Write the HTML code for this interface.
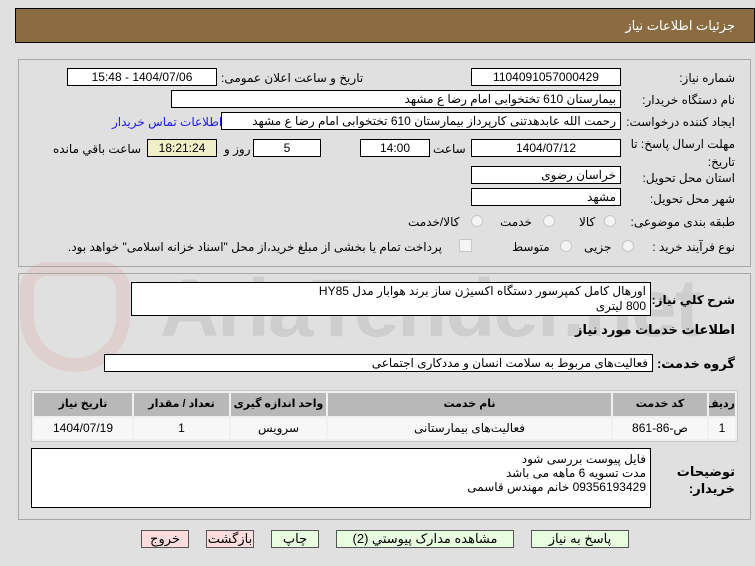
<!DOCTYPE html>
<html><head><meta charset="utf-8"><style>
*{margin:0;padding:0;box-sizing:border-box}
body{width:755px;height:566px;background:#e0e0e0;font-family:"Liberation Sans","DejaVu Sans",sans-serif;font-size:12px;color:#000;position:relative;overflow:hidden;direction:rtl}
.a{position:absolute;white-space:nowrap}
.box{position:absolute;background:#fff;border:1px solid #000;padding:0 4px;line-height:16px;white-space:nowrap}
.c{text-align:center}
.lbl{position:absolute;white-space:nowrap;line-height:16px}
.panel{position:absolute;border:1px solid #a8a8a8}
.rad{position:absolute;width:12px;height:12px;border-radius:50%;border:1px solid #c8c8c8;background:#f4f4f4}
.btn{position:absolute;border:1px solid #555;text-align:center;line-height:16px;font-size:13px}
.th,.td{position:absolute;text-align:center;white-space:nowrap;overflow:hidden}
.th{background:#b8b8b8;font-weight:bold;top:393px;height:23px;line-height:23px;font-size:11px}
.td{background:#f7f7f7;top:418px;height:21px;line-height:21px}
</style></head><body>
<div class="a" style="left:15px;top:8px;width:740px;height:35px;background:#8b6c42;border:1px solid #000"></div>
<div class="a" style="right:20px;top:18px;color:#fff;font-size:13px">جزئیات اطلاعات نیاز</div>

<div class="panel" style="left:18px;top:59px;width:733px;height:208px"></div>
<div class="a" style="left:20px;top:262px;width:110px;height:110px;border:14px solid rgba(220,120,120,0.15);border-radius:30px 30px 60px 60px"></div>
<div class="a" style="left:160px;top:262px;font-size:82px;font-weight:bold;color:rgba(0,0,0,0.08);direction:ltr;letter-spacing:-2px">AriaTender.net</div>

<div class="lbl" style="right:20px;top:70px">شماره نیاز:</div>
<div class="box c" style="left:471px;top:68px;width:150px;height:18px">1104091057000429</div>
<div class="lbl" style="left:221px;top:70px">تاریخ و ساعت اعلان عمومی:</div>
<div class="box c" style="left:67px;top:68px;width:150px;height:18px">1404/07/06 - 15:48</div>

<div class="lbl" style="right:20px;top:92px">نام دستگاه خریدار:</div>
<div class="box" style="left:171px;top:90px;width:450px;height:18px">بیمارستان 610 تختخوابی امام رضا ع  مشهد</div>

<div class="lbl" style="right:20px;top:114px">ایجاد کننده درخواست:</div>
<div class="box" style="left:221px;top:112px;width:400px;height:18px">رحمت الله عابدهدتنی کارپرداز بیمارستان 610 تختخوابی امام رضا ع  مشهد</div>
<div class="lbl" style="left:112px;top:114px;color:#1a1aff">اطلاعات تماس خریدار</div>

<div class="lbl" style="right:20px;top:136px">مهلت ارسال پاسخ: تا</div>
<div class="lbl" style="right:20px;top:154px">تاریخ:</div>
<div class="box c" style="left:471px;top:139px;width:150px;height:18px">1404/07/12</div>
<div class="lbl" style="left:433px;top:141px">ساعت</div>
<div class="box c" style="left:360px;top:139px;width:70px;height:18px">14:00</div>
<div class="box c" style="left:253px;top:139px;width:68px;height:18px">5</div>
<div class="lbl" style="left:224px;top:141px">روز و</div>
<div class="box c" style="left:147px;top:139px;width:70px;height:18px;background:#f0efc8">18:21:24</div>
<div class="lbl" style="left:53px;top:141px">ساعت باقي مانده</div>

<div class="lbl" style="right:20px;top:170px">استان محل تحویل:</div>
<div class="box" style="left:471px;top:166px;width:150px;height:18px">خراسان رضوی</div>
<div class="lbl" style="right:20px;top:191px">شهر محل تحویل:</div>
<div class="box" style="left:471px;top:188px;width:150px;height:18px">مشهد</div>

<div class="lbl" style="right:20px;top:214px">طبقه بندی موضوعی:</div>
<div class="rad" style="left:604px;top:215px"></div><div class="lbl" style="left:579px;top:214px">کالا</div>
<div class="rad" style="left:543px;top:215px"></div><div class="lbl" style="left:500px;top:214px">خدمت</div>
<div class="rad" style="left:471px;top:215px"></div><div class="lbl" style="left:408px;top:214px">کالا/خدمت</div>

<div class="lbl" style="right:20px;top:239px">نوع فرآیند خرید :</div>
<div class="rad" style="left:622px;top:240px"></div><div class="lbl" style="left:584px;top:239px">جزیی</div>
<div class="rad" style="left:560px;top:240px"></div><div class="lbl" style="left:512px;top:239px">متوسط</div>
<div class="a" style="left:459px;top:239px;width:13px;height:13px;border:1px solid #c8c8c8;background:#f4f4f4"></div>
<div class="lbl" style="left:68px;top:239px">پرداخت تمام یا بخشی از مبلغ خرید،از محل "اسناد خزانه اسلامی" خواهد بود.</div>

<div class="panel" style="left:18px;top:273px;width:733px;height:247px"></div>
<div class="lbl" style="right:20px;top:292px;font-weight:bold;font-size:12px">شرح کلي نیاز:</div>
<div class="box" style="left:131px;top:282px;width:520px;height:34px;line-height:15px;padding-top:1px">اورهال کامل کمپرسور دستگاه اکسیژن ساز برند هوابار مدل  HY85<br>800 لیتری</div>
<div class="lbl" style="right:20px;top:322px;font-weight:bold;font-size:13px">اطلاعات خدمات مورد نیاز</div>
<div class="lbl" style="right:20px;top:356px;font-weight:bold;font-size:13px">گروه خدمت:</div>
<div class="box" style="left:104px;top:354px;width:549px;height:18px">فعالیت‌های مربوط به سلامت انسان و مددکاری اجتماعی</div>

<div class="a" style="left:31px;top:390px;width:707px;height:52px;background:#f0f0f0;border:1px solid #c8c8c8"></div>
<div class="th" style="left:709px;width:26px">ردیف</div>
<div class="th" style="left:613px;width:94px">کد خدمت</div>
<div class="th" style="left:328px;width:283px">نام خدمت</div>
<div class="th" style="left:231px;width:95px">واحد اندازه گیری</div>
<div class="th" style="left:134px;width:95px">تعداد / مقدار</div>
<div class="th" style="left:34px;width:98px">تاریخ نیاز</div>
<div class="td" style="left:709px;width:26px">1</div>
<div class="td" style="left:613px;width:94px">ص-86-861</div>
<div class="td" style="left:328px;width:283px">فعالیت‌های بیمارستانی</div>
<div class="td" style="left:231px;width:95px">سرویس</div>
<div class="td" style="left:134px;width:95px">1</div>
<div class="td" style="left:34px;width:98px">1404/07/19</div>

<div class="lbl" style="right:20px;top:463px;font-weight:bold;font-size:13px;line-height:17px">توضیحات<br>خریدار:</div>
<div class="box" style="left:31px;top:448px;width:620px;height:60px;line-height:14px;padding-top:3px">فایل پیوست بررسی شود<br>مدت تسویه 6 ماهه می باشد<br>09356193429  خانم مهندس قاسمی</div>

<div class="btn" style="left:531px;top:530px;width:98px;height:18px;background:#e8fde0">پاسخ به نیاز</div>
<div class="btn" style="left:336px;top:530px;width:178px;height:18px;background:#e8fde0">مشاهده مدارک پیوستي (2)</div>
<div class="btn" style="left:271px;top:530px;width:48px;height:18px;background:#e8fde0">چاپ</div>
<div class="btn" style="left:206px;top:530px;width:48px;height:18px;background:#fcdcdc">بازگشت</div>
<div class="btn" style="left:141px;top:530px;width:48px;height:18px;background:#fcdcdc">خروج</div>
</body></html>
